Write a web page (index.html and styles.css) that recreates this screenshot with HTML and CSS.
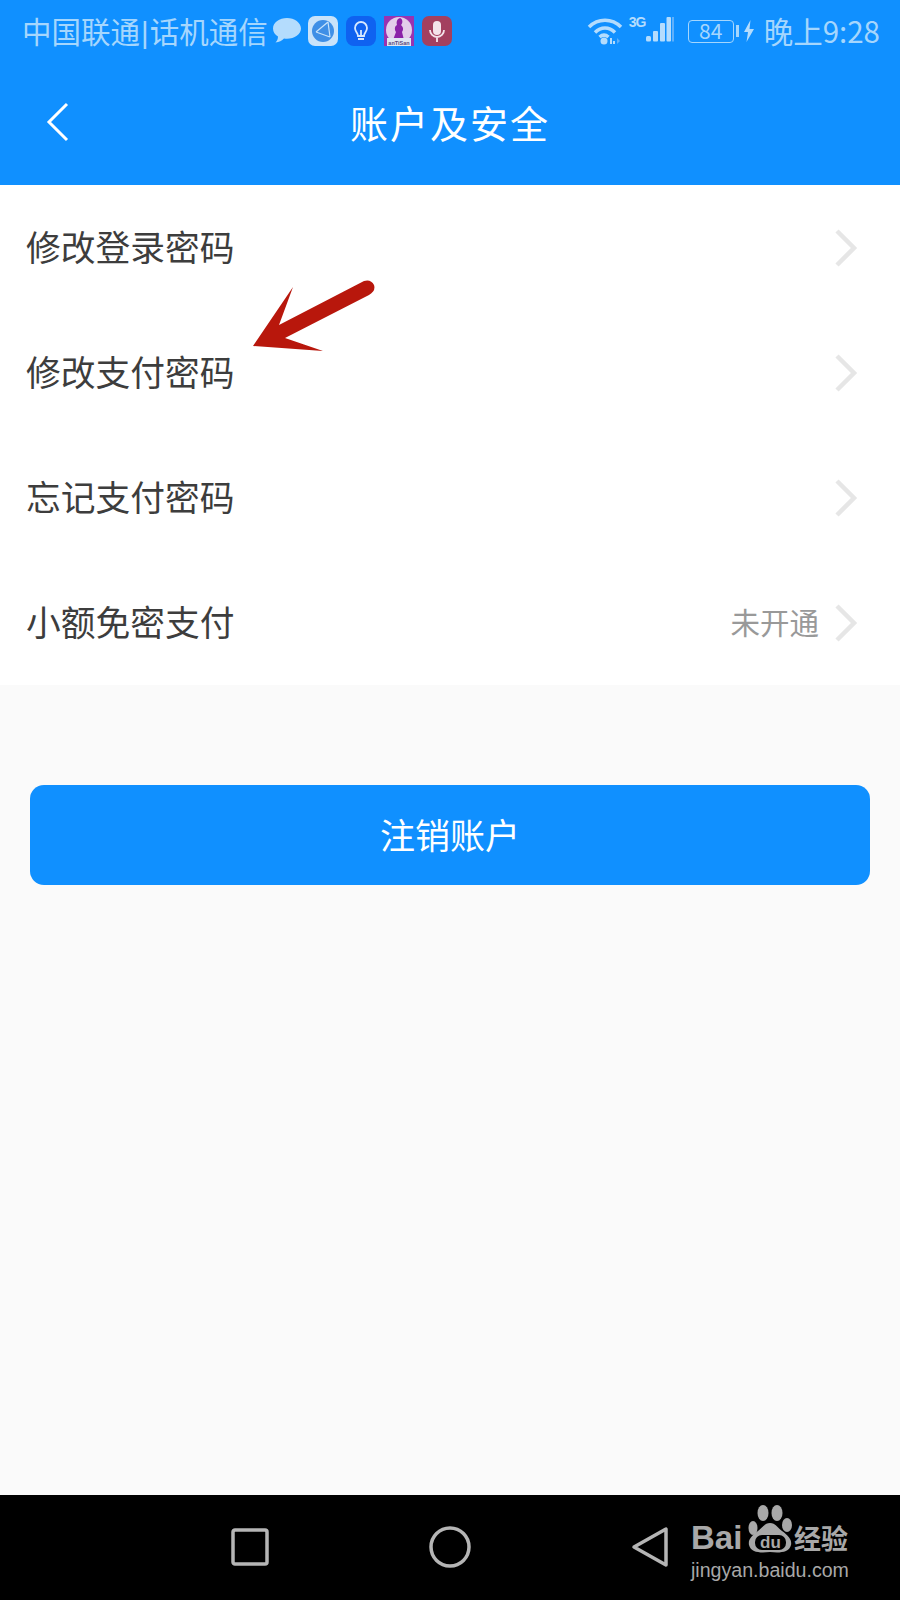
FILE: index.html
```html
<!DOCTYPE html>
<html>
<head>
  <meta charset="utf-8">
  <title>账户及安全</title>
  <link rel="stylesheet" href="styles.css">
</head>
<body>
  <div class="phone">
    <div class="header">
      <!-- status bar -->
      <div class="status-bar">
        <span class="carrier">中国联通<span class="carrier-sep">|</span>话机通信</span>
        <div class="notify-icons">
          <svg class="bubble" width="28" height="28" viewBox="0 0 28 28">
            <path d="M14 1C6.500 1 0 5.500 0 11.500c0 3.500 2 6.300 5 8 0 2.500-1 4.500-2.500 6 3.500-.3 6.500-2 8.500-4 1 .2 2 .3 3 .3 7.500 0 14-4.500 14-10.300S21.500 1 14 1z" fill="#b4dcfd"/>
          </svg>
          <svg class="app" width="30" height="30" viewBox="0 0 30 30">
            <rect width="30" height="30" rx="7" fill="#c9e3fa"/>
            <circle cx="15" cy="15" r="11" fill="#3f8fe6"/>
            <path d="M8 16L20 6M8 16L22 21M20 6L22 21" fill="none" stroke="#c9e3fa" stroke-width="1.200"/>
          </svg>
          <svg class="app" width="30" height="30" viewBox="0 0 30 30">
            <rect width="30" height="30" rx="8" fill="#0f62f0"/>
            <path d="M12 20c0-3-3-4-3-8a6 6 0 0 1 12 0c0 4-3 5-3 8z" fill="none" stroke="#d6e8ff" stroke-width="1.800"/>
            <path d="M12 23h6M15 20v-6" stroke="#d6e8ff" stroke-width="1.800" fill="none"/>
          </svg>
          <svg class="app" width="30" height="30" viewBox="0 0 30 30">
            <rect width="30" height="30" fill="#9a33b0"/>
            <circle cx="15" cy="14" r="13" fill="#e3cdea"/>
            <path d="M16 2c3 1 3 5 1 7 2 2 3 4 1 7l2 8H9l3-8c-2-3-1-6 1-7-1-3 0-6 3-7z" fill="#8a22a8"/>
            <rect x="3" y="22" width="24" height="8" fill="#dfe6f2"/>
            <text class="app-label" x="15" y="28.500">anTiSan</text>
          </svg>
          <svg class="app" width="30" height="30" viewBox="0 0 30 30">
            <rect width="30" height="30" rx="7" fill="#a3405f"/>
            <rect x="11" y="5" width="8" height="14" rx="4" fill="#f4e4ea"/>
            <path d="M8 14a7 7 0 0 0 14 0M15 21v5" fill="none" stroke="#f4e4ea" stroke-width="1.800"/>
          </svg>
        </div>
        <div class="status-right">
          <svg class="wifi" width="36" height="28" viewBox="0 0 36 28">
            <path d="M2 10C11 1 25 1 34 10M8 15.500C14 9.500 22 9.500 28 15.500M12.500 20c3-2.500 6-2.500 9 0" fill="none" stroke="#b4dcfd" stroke-width="3.500"/>
            <circle cx="17" cy="24" r="3.500" fill="#b4dcfd"/>
            <path d="M24 27v-6M27 27v-3" stroke="#b4dcfd" stroke-width="2"/>
            <path d="M30 21l3 3-3 3z" fill="#5fb0fb"/>
          </svg>
          <div class="signal">
            <span class="net">3G</span>
            <svg width="30" height="28" viewBox="0 0 30 28">
              <rect x="2" y="19" width="5" height="5.500" rx="1.500" fill="#b4dcfd"/>
              <rect x="9" y="14" width="5" height="10.500" rx="1" fill="#b4dcfd"/>
              <rect x="16" y="6" width="5" height="18.500" rx="1" fill="#b4dcfd"/>
              <rect x="22.500" y="0" width="4.500" height="24.500" rx="1" fill="#b4dcfd"/>
              <rect x="28" y="0" width="2" height="24.500" fill="#5fb0fb"/>
            </svg>
          </div>
          <div class="battery">
            <span class="battery-level">84</span>
            <span class="battery-nub"></span>
          </div>
          <svg class="bolt" width="10" height="22" viewBox="0 0 10 22">
            <path d="M6.500 0L0 12h4l-1.500 10L10 9H5.500z" fill="#b4dcfd"/>
          </svg>
          <span class="clock">晚上9:28</span>
        </div>
      </div>
      <!-- title bar -->
      <div class="title-bar">
        <svg class="back" width="24" height="40" viewBox="0 0 24 40">
          <path d="M21 2L3 20l18 18" fill="none" stroke="#fff" stroke-width="3"/>
        </svg>
        <h1 class="title">账户及安全</h1>
      </div>
    </div>

    <div class="main">
      <div class="menu">
        <div class="menu-row">
          <span class="menu-label">修改登录密码</span>
          <svg class="chevron" width="24" height="40" viewBox="0 0 24 40"><path d="M3 3l17 17L3 37" fill="none" stroke="#e6e6e6" stroke-width="4.500"/></svg>
        </div>
        <div class="menu-row">
          <span class="menu-label">修改支付密码</span>
          <svg class="chevron" width="24" height="40" viewBox="0 0 24 40"><path d="M3 3l17 17L3 37" fill="none" stroke="#e6e6e6" stroke-width="4.500"/></svg>
        </div>
        <div class="menu-row">
          <span class="menu-label">忘记支付密码</span>
          <svg class="chevron" width="24" height="40" viewBox="0 0 24 40"><path d="M3 3l17 17L3 37" fill="none" stroke="#e6e6e6" stroke-width="4.500"/></svg>
        </div>
        <div class="menu-row">
          <span class="menu-label">小额免密支付</span>
          <span class="menu-value">未开通</span>
          <svg class="chevron" width="24" height="40" viewBox="0 0 24 40"><path d="M3 3l17 17L3 37" fill="none" stroke="#e6e6e6" stroke-width="4.500"/></svg>
        </div>
      </div>
      <button class="cancel-btn" type="button">注销账户</button>
    </div>

    <div class="nav-bar">
      <svg class="nav-icon nav-square" width="38" height="38" viewBox="0 0 38 38">
        <rect x="2" y="2" width="34" height="34" rx="2" fill="none" stroke="#b5b5b5" stroke-width="3.500"/>
      </svg>
      <svg class="nav-icon nav-circle" width="42" height="42" viewBox="0 0 42 42">
        <circle cx="21" cy="21" r="19" fill="none" stroke="#b5b5b5" stroke-width="3.500"/>
      </svg>
      <svg class="nav-icon nav-back" width="38" height="42" viewBox="0 0 38 42">
        <path d="M35 3v36L3 21z" fill="none" stroke="#b5b5b5" stroke-width="3.500" stroke-linejoin="round"/>
      </svg>
    </div>

    <!-- red arrow drawn over the list -->
    <svg class="red-arrow" width="900" height="400" viewBox="0 0 900 400">
      <path d="M253 346L293 287 279 325 364 281Q371 279 374 285 376 291 369 295L285 338 323 351z" fill="#b8170c"/>
    </svg>

    <!-- watermark -->
    <div class="watermark">
      <div class="wm-top">
        <span class="wm-bai">Bai</span>
        <svg class="wm-paw" width="46" height="48" viewBox="0 0 46 48">
          <ellipse cx="15" cy="8" rx="5.500" ry="8" fill="#a8a8a8"/>
          <ellipse cx="29" cy="8" rx="5.500" ry="8" fill="#a8a8a8"/>
          <ellipse cx="5" cy="23" rx="4.500" ry="7" fill="#a8a8a8"/>
          <ellipse cx="39" cy="20" rx="5" ry="7" fill="#a8a8a8"/>
          <path d="M22 18c5 0 7 4 12 8 7 5 10 9 9 14-2 8-12 8-21 7-9 1-19 1-21-7-1-5 2-9 9-14 5-4 7-8 12-8z" fill="#a8a8a8"/>
          <rect x="7" y="30" width="31" height="15" rx="7" fill="#000"/>
          <text x="22.500" y="43" class="wm-du">du</text>
        </svg>
        <span class="wm-cn">经验</span>
      </div>
      <div class="wm-url">jingyan.baidu.com</div>
    </div>
  </div>
</body>
</html>
```

FILE: styles.css
```css
* {
  box-sizing: border-box;
}

body {
  margin: 0;
  font-family: "Noto Sans CJK SC", "Noto Sans", sans-serif;
}

.phone {
  position: relative;
  width: 900px;
  height: 1600px;
  display: flex;
  flex-direction: column;
  background-color: #fafafa;
  overflow: hidden;
}

.header {
  height: 185px;
  background-color: #1090ff;
  flex-shrink: 0;
}

/* status bar */
.status-bar {
  height: 62px;
  display: flex;
  align-items: center;
  padding: 0 20px 0 22px;
  color: #a5d6fd;
}

.carrier {
  font-size: 29.500px;
  line-height: 36px;
  width: 251px;
  white-space: nowrap;
}

.carrier-sep {
  font-family: "Liberation Sans", sans-serif;
  margin: 0 1px;
}

.notify-icons {
  display: flex;
  align-items: center;
  gap: 8px;
}

.app {
  display: block;
}

.app-label {
  font-family: "Liberation Sans", sans-serif;
  font-size: 5.500px;
  font-weight: bold;
  text-anchor: middle;
  fill: #5a4a7e;
}

.bubble {
  margin-right: -1px;
}

.status-right {
  margin-left: auto;
  display: flex;
  align-items: center;
}

.wifi {
  margin-right: 6px;
}

.signal {
  display: flex;
  align-items: flex-start;
  margin-right: 14px;
}

.net {
  font-family: "Liberation Sans", sans-serif;
  font-size: 14px;
  font-weight: bold;
  line-height: 14px;
  letter-spacing: -1px;
  width: 15px;
  margin-top: -2px;
  color: #b4dcfd;
}

.battery {
  display: flex;
  align-items: center;
  margin-right: 5px;
}

.battery-level {
  width: 46px;
  height: 23px;
  border: 1.500px solid #a5d6fd;
  border-radius: 4px;
  font-size: 21px;
  line-height: 19px;
  text-align: center;
}

.battery-nub {
  width: 3px;
  height: 12px;
  margin-left: 2px;
  background-color: #a5d6fd;
}

.bolt {
  margin-right: 10px;
}

.clock {
  font-size: 29.500px;
  line-height: 36px;
  padding-bottom: 3px;
  white-space: nowrap;
}

/* title bar */
.title-bar {
  height: 123px;
  position: relative;
  display: flex;
  align-items: center;
  justify-content: center;
  padding-bottom: 4px;
}

.back {
  position: absolute;
  left: 46px;
  top: 40px;
}

.title {
  margin: 0;
  font-size: 38px;
  font-weight: 400;
  line-height: 50px;
  letter-spacing: 2px;
  color: #fff;
}

/* list */
.main {
  flex: 1;
}

.menu {
  background-color: #fff;
}

.menu-row {
  height: 125px;
  display: flex;
  align-items: center;
  padding: 0 42px 0 26px;
}

.menu-label {
  font-size: 34.750px;
  line-height: 46px;
  padding-bottom: 4px;
  color: #3d3d3d;
}

.menu-value {
  margin-left: auto;
  margin-right: 15px;
  padding-bottom: 4px;
  font-size: 29.500px;
  line-height: 40px;
  color: #999;
}

.menu-value + .chevron {
  margin-left: 0;
}

.chevron {
  margin-left: auto;
}

.cancel-btn {
  display: block;
  width: 840px;
  height: 100px;
  margin: 100px 0 0 30px;
  padding: 0 0 4px;
  border: none;
  border-radius: 14px;
  background-color: #1090ff;
  color: #fff;
  font-family: inherit;
  font-size: 35px;
}

/* bottom nav */
.nav-bar {
  height: 105px;
  flex-shrink: 0;
  background-color: #000;
  position: relative;
}

.nav-icon {
  position: absolute;
}

.nav-square {
  left: 231px;
  top: 33px;
}

.nav-circle {
  left: 429px;
  top: 31px;
}

.nav-back {
  left: 631px;
  top: 31px;
}

.red-arrow {
  position: absolute;
  left: 0;
  top: 0;
  pointer-events: none;
}

/* watermark */
.watermark {
  position: absolute;
  left: 691px;
  top: 1505px;
  width: 165px;
  color: #a8a8a8;
}

.wm-top {
  display: flex;
  align-items: flex-end;
  height: 48px;
}

.wm-bai {
  font-family: "Liberation Sans", sans-serif;
  font-size: 33px;
  font-weight: bold;
  line-height: 30px;
  width: 57px;
  white-space: nowrap;
}

.wm-paw {
  display: block;
  flex-shrink: 0;
}

.wm-du {
  font-family: "Liberation Sans", sans-serif;
  font-size: 17px;
  font-weight: bold;
  text-anchor: middle;
  fill: #a8a8a8;
}

.wm-cn {
  font-size: 27px;
  font-weight: 700;
  line-height: 30px;
  white-space: nowrap;
}

.wm-url {
  font-family: "Liberation Sans", sans-serif;
  font-size: 19.600px;
  line-height: 24px;
  margin-top: 5px;
  white-space: nowrap;
}
```
